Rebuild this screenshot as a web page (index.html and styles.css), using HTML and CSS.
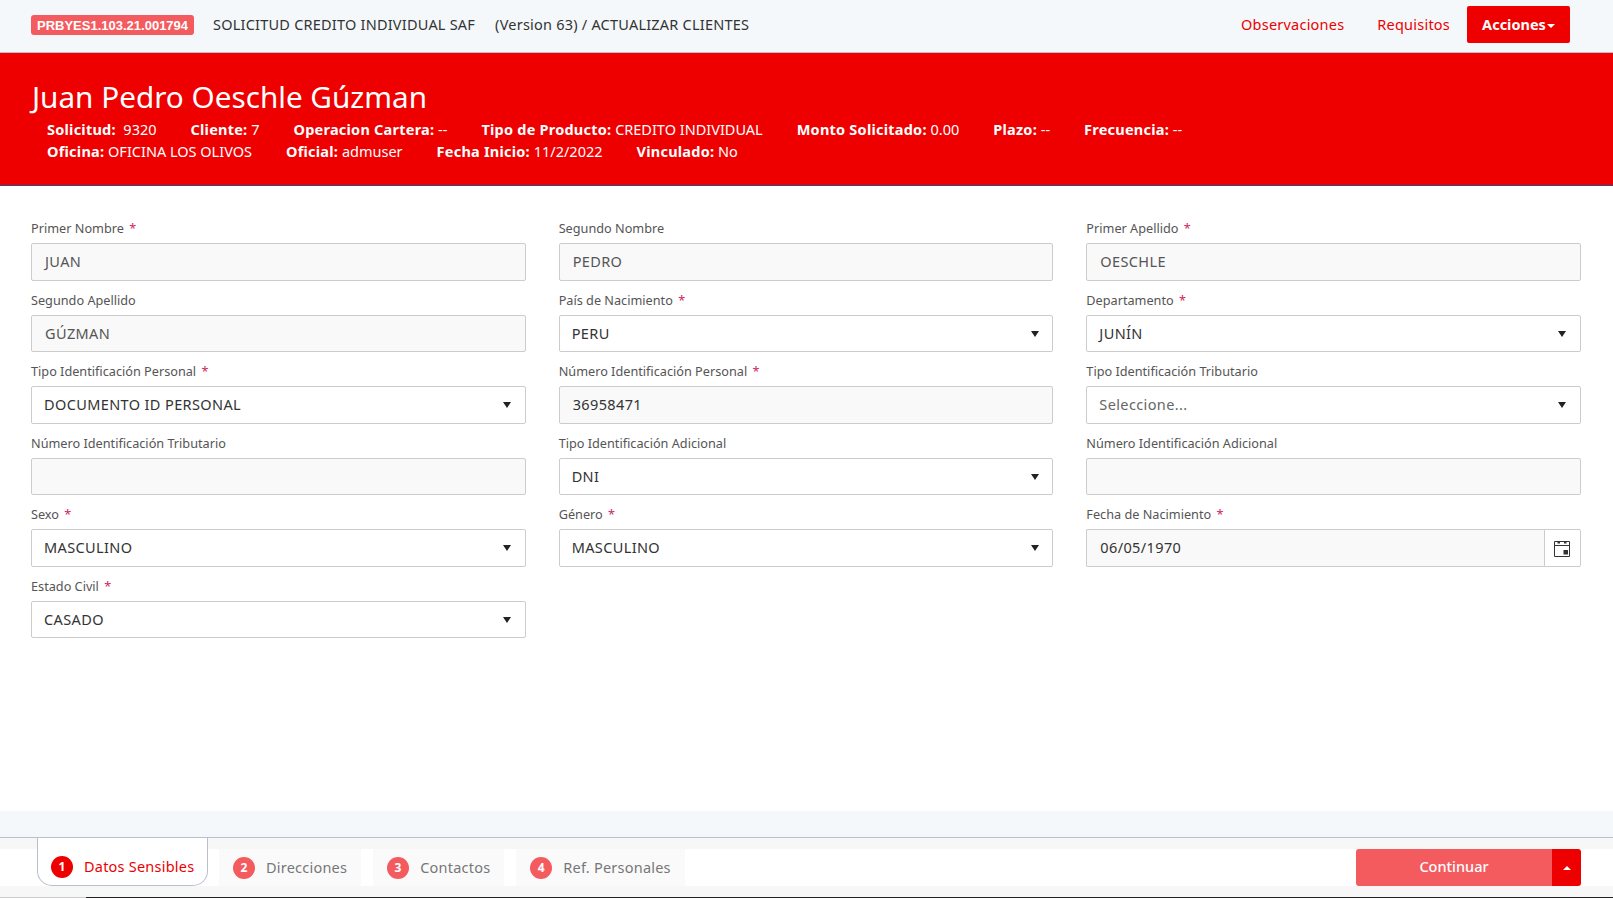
FILE: index.html
```html
<!DOCTYPE html>
<html lang="es">
<head>
    <meta charset="UTF-8">
    <meta name="viewport" content="width=device-width, initial-scale=1.0">
    <title>Solicitud Credito Individual</title>
    <link rel="stylesheet" href="styles.css">
</head>
<body>

    <header class="topbar">
        <div class="topbar-left">
            <span class="badge">PRBYES1.103.21.001794</span>
            <span class="crumb">SOLICITUD CREDITO INDIVIDUAL SAF</span>
            <span class="crumb">(Version 63) / ACTUALIZAR CLIENTES</span>
        </div>
        <nav class="topbar-right">
            <a class="top-link">Observaciones</a>
            <a class="top-link">Requisitos</a>
            <button class="btn-actions">Acciones<span class="caret-down"></span></button>
        </nav>
    </header>

    <section class="hero">
        <h1>Juan Pedro Oeschle Gúzman</h1>
        <div class="hero-row">
            <span><b>Solicitud:</b>&nbsp; 9320</span>
            <span><b>Cliente:</b> 7</span>
            <span><b>Operacion Cartera:</b> --</span>
            <span><b>Tipo de Producto:</b> CREDITO INDIVIDUAL</span>
            <span><b>Monto Solicitado:</b> 0.00</span>
            <span><b>Plazo:</b> --</span>
            <span><b>Frecuencia:</b> --</span>
        </div>
        <div class="hero-row">
            <span><b>Oficina:</b> OFICINA LOS OLIVOS</span>
            <span><b>Oficial:</b> admuser</span>
            <span><b>Fecha Inicio:</b> 11/2/2022</span>
            <span><b>Vinculado:</b> No</span>
        </div>
    </section>

    <main class="form-area">
        <form class="form-grid">
            <div class="field">
                <label>Primer Nombre <i>*</i></label>
                <div class="control filled">JUAN</div>
            </div>
            <div class="field">
                <label>Segundo Nombre</label>
                <div class="control filled">PEDRO</div>
            </div>
            <div class="field">
                <label>Primer Apellido <i>*</i></label>
                <div class="control filled">OESCHLE</div>
            </div>

            <div class="field">
                <label>Segundo Apellido</label>
                <div class="control filled">GÚZMAN</div>
            </div>
            <div class="field">
                <label>País de Nacimiento <i>*</i></label>
                <div class="control select">PERU</div>
            </div>
            <div class="field">
                <label>Departamento <i>*</i></label>
                <div class="control select">JUNÍN</div>
            </div>

            <div class="field">
                <label>Tipo Identificación Personal <i>*</i></label>
                <div class="control select">DOCUMENTO ID PERSONAL</div>
            </div>
            <div class="field">
                <label>Número Identificación Personal <i>*</i></label>
                <div class="control filled dark">36958471</div>
            </div>
            <div class="field">
                <label>Tipo Identificación Tributario</label>
                <div class="control select placeholder">Seleccione...</div>
            </div>

            <div class="field">
                <label>Número Identificación Tributario</label>
                <div class="control filled"></div>
            </div>
            <div class="field">
                <label>Tipo Identificación Adicional</label>
                <div class="control select">DNI</div>
            </div>
            <div class="field">
                <label>Número Identificación Adicional</label>
                <div class="control filled"></div>
            </div>

            <div class="field">
                <label>Sexo <i>*</i></label>
                <div class="control select">MASCULINO</div>
            </div>
            <div class="field">
                <label>Género <i>*</i></label>
                <div class="control select">MASCULINO</div>
            </div>
            <div class="field">
                <label>Fecha de Nacimiento <i>*</i></label>
                <div class="date-group">
                    <div class="control filled dark">06/05/1970</div>
                    <span class="date-btn">
                        <svg width="16" height="17" viewBox="0 0 16 17">
                            <path d="M.5 1.5h15v15H.5z M.5 5.5h15" fill="none" stroke="#333" stroke-width="1"/>
                            <path d="M3.5 1h2.5v2.5H3.5z M10 1h2.5v2.5H10z" fill="#333"/>
                            <rect x="9.5" y="10" width="4.5" height="4.5" fill="#333"/>
                        </svg>
                    </span>
                </div>
            </div>

            <div class="field">
                <label>Estado Civil <i>*</i></label>
                <div class="control select">CASADO</div>
            </div>
        </form>
    </main>

    <div class="spacer-band"></div>

    <footer class="stepbar">
        <div class="steps">
            <div class="step active"><span class="num">1</span>Datos Sensibles</div>
            <div class="step"><span class="num">2</span>Direcciones</div>
            <div class="step"><span class="num">3</span>Contactos</div>
            <div class="step"><span class="num">4</span>Ref. Personales</div>
        </div>
        <div class="continue-group">
            <button class="btn-continue">Continuar</button>
            <span class="btn-up"><span class="caret-up"></span></span>
        </div>
    </footer>

    <div class="bottom-edge"></div>

</body>
</html>
```

FILE: styles.css
```css
* {
    box-sizing: border-box;
}

html, body {
    margin: 0;
    height: 898px;
    overflow: hidden;
}

body {
    font-family: "Noto Sans", "Open Sans", sans-serif;
    font-size: 14.5px;
    letter-spacing: .22px;
    color: #333;
    background-color: #fff;
    display: flex;
    flex-direction: column;
}

/* top bar */
.topbar {
    height: 53px;
    flex: none;
    display: flex;
    justify-content: space-between;
    align-items: center;
    padding: 0 43px 3px 31px;
    background-color: #f4f8fb;
    border-bottom: 1px solid #b8c0d0;
}

.topbar-left {
    display: flex;
    align-items: center;
}

.badge {
    background-color: #f45b5f;
    color: #fff;
    font-family: "Liberation Sans", Arial, sans-serif;
    font-size: 13px;
    font-weight: bold;
    letter-spacing: 0;
    padding: 0 6px;
    height: 20px;
    line-height: 21px;
    border-radius: 3px;
    margin-right: 19px;
}

.crumb {
    color: #333;
    margin-right: 20px;
    margin-bottom: 2px;
}

.topbar-right {
    display: flex;
    align-items: center;
}

.top-link {
    color: #ee0000;
    margin-right: 33px;
    margin-bottom: 2px;
}

.top-link:nth-child(2) {
    margin-right: 17px;
}

.btn-actions {
    height: 37px;
    width: 103px;
    padding: 0 0 2px;
    border: none;
    border-radius: 2px;
    background-color: #ee0000;
    color: #fff;
    font-family: inherit;
    font-size: 14.5px;
    font-weight: bold;
}

.caret-down {
    display: inline-block;
    margin-left: 1px;
    vertical-align: middle;
    border-left: 4px solid transparent;
    border-right: 4px solid transparent;
    border-top: 4px solid #fff;
}

/* red customer band */
.hero {
    height: 133px;
    flex: none;
    padding: 23px 31px 0;
    background-color: #ee0000;
    color: #fff;
    border-bottom: 1px solid #2b4b86;
}

.hero h1 {
    margin: 0 0 0 1px;
    font-size: 29.7px;
    font-weight: 400;
    letter-spacing: 0;
    line-height: 42px;
}

.hero-row {
    display: flex;
    gap: 34px;
    padding-left: 16px;
    letter-spacing: 0;
    line-height: 22px;
}

.hero-row b {
    letter-spacing: .23px;
}

/* form */
.form-area {
    flex: 1;
    padding: 30px 32px 0 31px;
}

.form-grid {
    display: grid;
    grid-template-columns: repeat(3, 1fr);
    column-gap: 33px;
    row-gap: 0;
}

.field {
    height: 71.5px;
}

.field label {
    display: block;
    height: 27px;
    padding-top: 3px;
    font-size: 12.7px;
    letter-spacing: 0;
    line-height: 18px;
    color: #555;
}

.field label i {
    font-style: normal;
    color: #d0245e;
    margin-left: 2px;
}

.control {
    height: 37.5px;
    padding: 0 13px;
    letter-spacing: .38px;
    line-height: 34px;
    border: 1px solid #ccc;
    border-radius: 2px;
    color: #333;
    position: relative;
}

.filled {
    background-color: #f9f9f9;
    color: #555;
    line-height: 35px;
}

.filled.dark {
    color: #333;
}

.select {
    padding-left: 12px;
}

.select::after {
    content: "";
    position: absolute;
    right: 13.5px;
    top: 15px;
    border-left: 4.5px solid transparent;
    border-right: 4.5px solid transparent;
    border-top: 6px solid #222;
}

.placeholder {
    color: #666;
}

.date-group {
    display: flex;
}

.date-group .control {
    flex: 1;
    border-radius: 2px 0 0 2px;
    border-right: none;
}

.date-btn {
    width: 37px;
    height: 37.5px;
    padding-top: 2px;
    display: flex;
    align-items: center;
    justify-content: center;
    border: 1px solid #ccc;
    border-radius: 0 2px 2px 0;
}

/* steps at the bottom */
.spacer-band {
    height: 27px;
    flex: none;
    background-color: #f4f8fb;
    border-bottom: 1px solid #b8c0d0;
}

.stepbar {
    height: 59px;
    flex: none;
    display: flex;
    justify-content: space-between;
    padding: 0 32px 0 37px;
    background: linear-gradient(#f7f7f7 0, #f7f7f7 11px, #fff 11px, #fff 48px, #f7f7f7 48px);
}

.steps {
    display: flex;
    align-items: flex-start;
}

.step {
    height: 37px;
    margin-top: 11px;
    margin-left: 12px;
    padding: 0 14px 2px;
    display: flex;
    align-items: center;
    background-color: #fafafa;
    color: #777;
}

.step.active {
    height: 48px;
    width: 171px;
    margin: 0 -1px 0 0;
    padding: 11px 0 2px 13px;
    color: #ee0000;
    background-color: #fff;
    border: 1px solid #b8c0d0;
    border-top: none;
    border-radius: 0 0 15px 15px;
}

.num {
    width: 22px;
    height: 22px;
    margin-top: 2px;
    margin-right: 11px;
    border-radius: 50%;
    background-color: #f45b5f;
    color: #fff;
    font-size: 12px;
    font-weight: bold;
    text-align: center;
    line-height: 22px;
}

.step.active .num {
    background-color: #ee0000;
}

.continue-group {
    display: flex;
    height: 37px;
    margin-top: 11px;
    border-radius: 3px;
    overflow: hidden;
}

.btn-continue {
    width: 196px;
    padding: 0 0 3px;
    border: none;
    background-color: #f45b5f;
    color: #fff;
    font-family: inherit;
    font-size: 14.5px;
    font-weight: 500;
}

.btn-up {
    width: 29px;
    display: flex;
    align-items: center;
    justify-content: center;
    background-color: #ee0000;
}

.caret-up {
    border-left: 4px solid transparent;
    border-right: 4px solid transparent;
    border-bottom: 4px solid #fff;
}

.bottom-edge {
    height: 1px;
    flex: none;
    background: linear-gradient(to right, #ccc 86px, #222 86px);
}
```
